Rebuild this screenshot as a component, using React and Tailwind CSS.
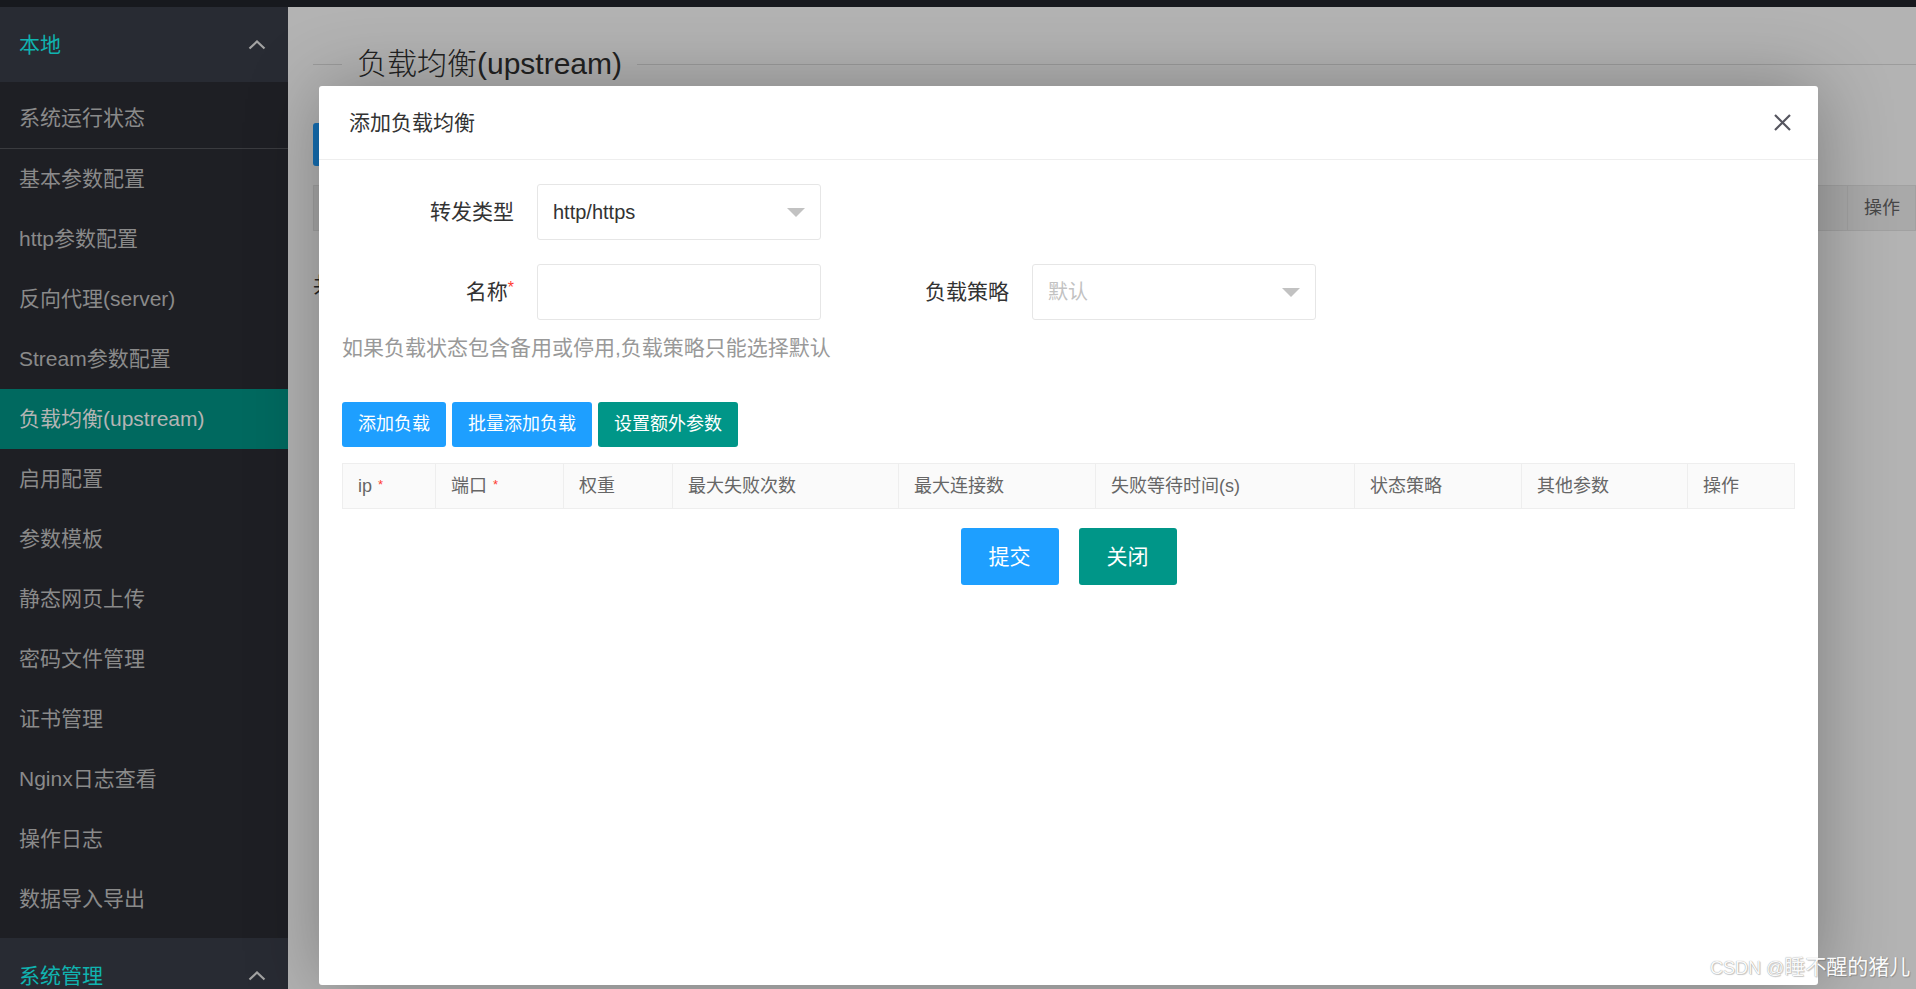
import React from 'react';

const menu = [
  '基本参数配置',
  'http参数配置',
  '反向代理(server)',
  'Stream参数配置',
  '负载均衡(upstream)',
  '启用配置',
  '参数模板',
  '静态网页上传',
  '密码文件管理',
  '证书管理',
  'Nginx日志查看',
  '操作日志',
  '数据导入导出',
];

const columns = [
  { label: 'ip', w: 92, req: true },
  { label: '端口', w: 128, req: true },
  { label: '权重', w: 109 },
  { label: '最大失败次数', w: 226 },
  { label: '最大连接数', w: 197 },
  { label: '失败等待时间(s)', w: 259 },
  { label: '状态策略', w: 167 },
  { label: '其他参数', w: 166 },
  { label: '操作', w: 110 },
];

function ChevronUp() {
  return (
    <svg width="18" height="10" viewBox="0 0 18 10" fill="none">
      <path d="M1.5 8.5 L9 1.5 L16.5 8.5" stroke="#a3a3a3" strokeWidth="2.2" />
    </svg>
  );
}

function GroupHeader({ title }) {
  return (
    <div className="h-[75px] shrink-0 bg-[#282b33] flex items-center justify-between pl-[19px] pr-[22px]">
      <span className="text-[21px] text-[#10b3b0]">{title}</span>
      <ChevronUp />
    </div>
  );
}

function Sidebar() {
  return (
    <aside className="w-[288px] shrink-0 bg-[#1e1f24] flex flex-col overflow-hidden">
      <GroupHeader title="本地" />
      <div className="shrink-0 pt-[6px] pb-[9px]">
        <div className="h-[61px] flex items-center pl-[19px] text-[21px] text-[#8a8a8a] border-b border-[#3a3b3f]">
          系统运行状态
        </div>
        {menu.map((m) => {
          const active = m === '负载均衡(upstream)';
          return (
            <div
              key={m}
              className={
                active
                  ? 'h-[60px] flex items-center pl-[19px] text-[21px] text-[#b4b4b4] bg-[#00695f]'
                  : 'h-[60px] flex items-center pl-[19px] text-[21px] text-[#8a8a8a]'
              }
            >
              {m}
            </div>
          );
        })}
      </div>
      <GroupHeader title="系统管理" />
    </aside>
  );
}

// page behind the dialog, already dimmed by the shade
function Background() {
  return (
    <main className="flex-1 bg-[#b3b3b3] pl-[25px] pt-[33px]">
      <div className="flex items-center h-[48px]">
        <div className="w-[29px] h-px bg-[#9c9c9c]" />
        <span className="px-[15px] text-[30px] font-light text-[#222] leading-none">负载均衡(upstream)</span>
        <div className="flex-1 h-px bg-[#9c9c9c]" />
      </div>
      <div className="mt-[35px] w-[140px] h-[43px] rounded-[3px] bg-[#156fb3]" />
      <div className="mt-[19px] h-[46px] flex border border-[#a1a1a1] bg-[#a9a9a9]">
        <div className="flex-1" />
        <div className="w-[68px] border-l border-[#a1a1a1] flex items-center pl-[16px] text-[18px] text-[#474747]">操作</div>
      </div>
      <div className="mt-[38px] text-[21px] text-[#242424]">共 0 条</div>
    </main>
  );
}

function Field({ label, req, children, className = '' }) {
  return (
    <div className={'flex items-center ' + className}>
      <div className="w-[195px] pr-[23px] text-right text-[21px] text-[#333]">
        {label}
        {req && <span className="text-[#ff3b30] text-[16px] align-top">*</span>}
      </div>
      {children}
    </div>
  );
}

function Select({ value, placeholder }) {
  return (
    <div className="w-[284px] h-[56px] border border-[#e6e6e6] rounded-[3px] bg-white flex items-center justify-between pl-[15px] pr-[15px]">
      <span className={placeholder ? 'text-[20px] text-[#c2c2c2]' : 'text-[20px] text-[#333]'}>{value}</span>
      <div className="w-0 h-0 border-l-[9px] border-r-[9px] border-t-[9px] border-l-transparent border-r-transparent border-t-[#c2c2c2]" />
    </div>
  );
}

function Dialog() {
  return (
    <div className="absolute left-[319px] top-[86px] w-[1499px] h-[899px] bg-white rounded-[3px] shadow-[1px_1px_75px_rgba(0,0,0,0.3)]">
      <div className="h-[74px] border-b border-[#eee] flex items-center justify-between pl-[30px] pr-[26px]">
        <span className="text-[21px] text-[#333]">添加负载均衡</span>
        <svg width="19" height="19" viewBox="0 0 19 19">
          <path d="M2 2 L17 17 M17 2 L2 17" stroke="#55555f" strokeWidth="2.2" />
        </svg>
      </div>
      <div className="px-[23px] pt-[24px]">
        <Field label="转发类型">
          <Select value="http/https" />
        </Field>
        <div className="flex mt-[24px]">
          <Field label="名称" req>
            <div className="w-[284px] h-[56px] border border-[#e6e6e6] rounded-[3px] bg-white" />
          </Field>
          <Field label="负载策略" className="ml-[16px]">
            <Select value="默认" placeholder />
          </Field>
        </div>
        <div className="mt-[16px] h-[24px] leading-[24px] text-[21px] text-[#999]">
          如果负载状态包含备用或停用,负载策略只能选择默认
        </div>
        <div className="mt-[42px] flex gap-[6px]">
          <button className="h-[45px] px-[16px] rounded-[3px] bg-[#1e9fff] text-white text-[18px]">添加负载</button>
          <button className="h-[45px] px-[16px] rounded-[3px] bg-[#1e9fff] text-white text-[18px]">批量添加负载</button>
          <button className="h-[45px] px-[16px] rounded-[3px] bg-[#009688] text-white text-[18px]">设置额外参数</button>
        </div>
        <div className="mt-[16px] flex h-[46px] border border-[#eee] bg-[#fafafa]">
          {columns.map((c, i) => (
            <div
              key={c.label}
              style={{ width: c.w }}
              className={
                i === 0
                  ? 'shrink-0 flex items-center pl-[15px] text-[18px] text-[#666]'
                  : 'shrink-0 flex items-center pl-[15px] text-[18px] text-[#666] border-l border-[#eee]'
              }
            >
              {c.label}
              {c.req && <span className="ml-[6px] text-[13px] text-[#ff3b30] self-start mt-[11px]">*</span>}
            </div>
          ))}
        </div>
        <div className="mt-[19px] flex justify-center gap-[20px]">
          <button className="h-[57px] w-[98px] rounded-[3px] bg-[#1e9fff] text-white text-[21px]">提交</button>
          <button className="h-[57px] w-[98px] rounded-[3px] bg-[#009688] text-white text-[21px]">关闭</button>
        </div>
      </div>
    </div>
  );
}

export default function App() {
  return (
    <div className="relative w-[1916px] h-[989px] overflow-hidden flex flex-col font-['Liberation_Sans','Noto_Sans_CJK_SC',sans-serif]">
      <div className="h-[7px] shrink-0 bg-[#17191e]" />
      <div className="flex flex-1 min-h-0">
        <Sidebar />
        <Background />
      </div>
      <Dialog />
      <div className="absolute left-[1710px] top-[956px] text-[#fafafa] [text-shadow:0_0_1px_#8a8a8a,1px_1px_1px_rgba(0,0,0,0.2)] leading-none flex items-end">
        <span className="text-[18px]">CSDN @</span>
        <span className="text-[21px]">睡不醒的猪儿</span>
      </div>
    </div>
  );
}
